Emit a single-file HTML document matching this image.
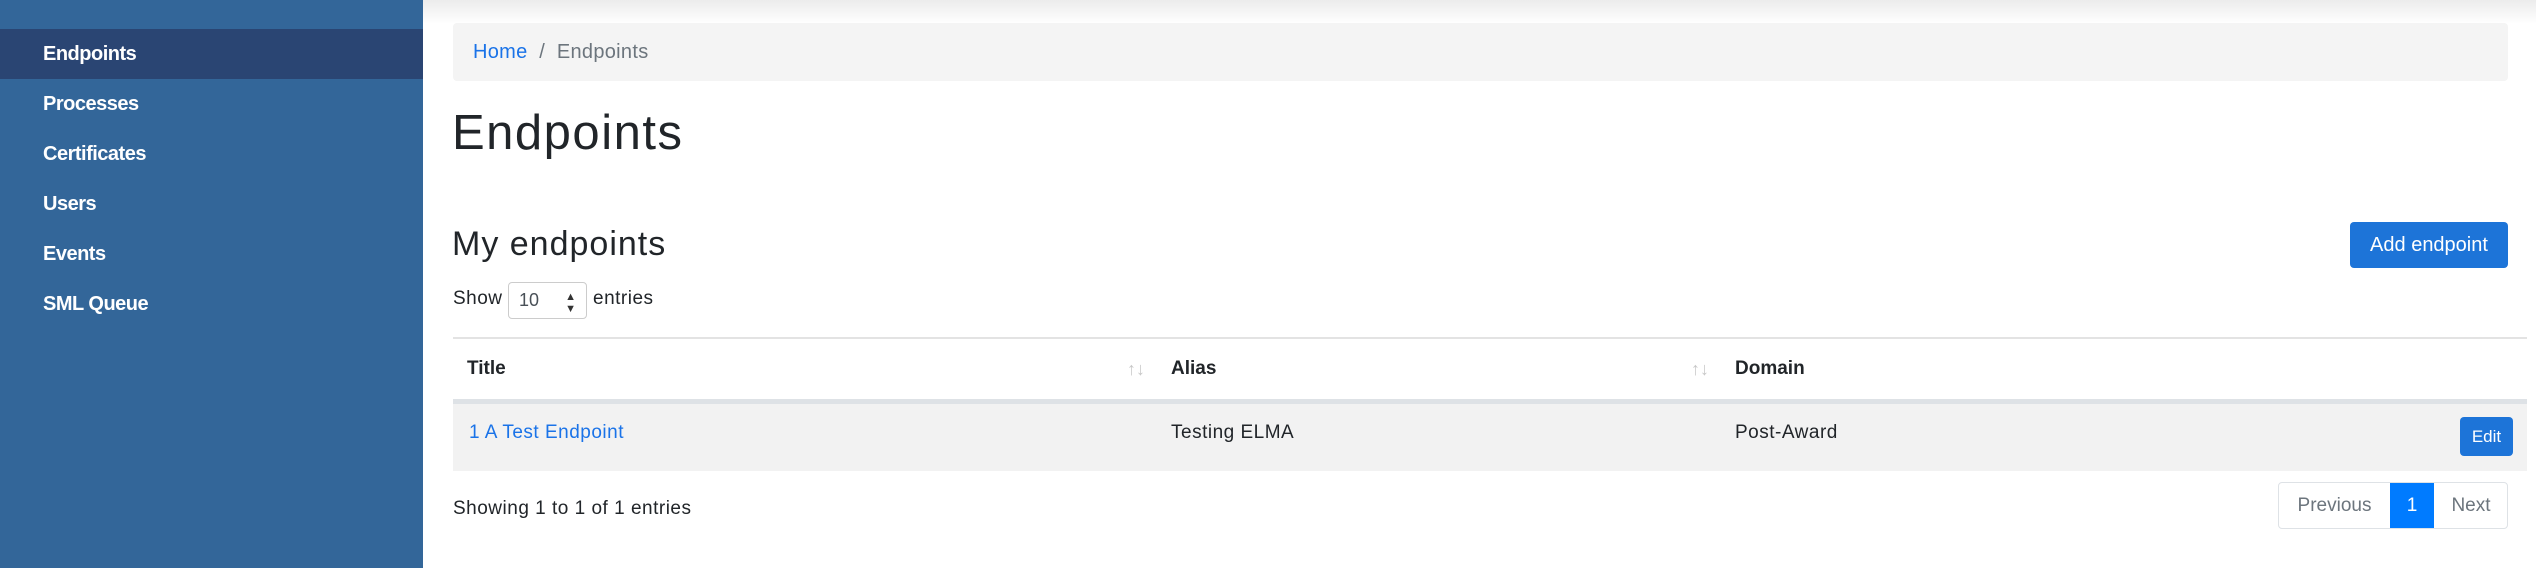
<!DOCTYPE html>
<html><head><style>
*{box-sizing:border-box;margin:0;padding:0}
body{width:2536px;height:568px;overflow:hidden;background:#fff;font-family:"Liberation Sans",sans-serif;color:#212529;position:relative}
.sb{position:absolute;left:0;top:0;width:423px;height:568px;background:#336699}
.sb div{position:absolute;left:0;width:423px;height:50px;line-height:50px;padding-left:43px;color:#fff;font-weight:bold;font-size:20px;letter-spacing:-0.5px}
.sb .act{background:#2a4573}
.topsh{position:absolute;left:423px;top:0;right:0;height:24px;background:linear-gradient(#ececec,#fff)}
.bc{position:absolute;left:453px;top:23px;width:2055px;height:58px;background:#f4f4f4;border-radius:4px;font-size:20px;line-height:58px;padding-left:20px;color:#6c757d;letter-spacing:0.3px}
.bc a{color:#1a73e8;text-decoration:none}
.abs{position:absolute;white-space:nowrap}
.t{letter-spacing:0.5px}
.btn{position:absolute;background:#1d74d8;color:#fff;border-radius:4px;text-align:center}
</style></head><body>
<div class="sb">
<div class="act" style="top:29px">Endpoints</div>
<div style="top:79px">Processes</div>
<div style="top:129px">Certificates</div>
<div style="top:179px">Users</div>
<div style="top:229px">Events</div>
<div style="top:279px">SML Queue</div>
</div>
<div class="topsh"></div>
<div class="bc"><a>Home</a>&nbsp; / &nbsp;Endpoints</div>
<div class="abs" style="left:452px;top:101px;font-size:49px;line-height:64px;font-weight:300;letter-spacing:1.5px">Endpoints</div>
<div class="abs" style="left:452px;top:222px;font-size:34px;line-height:44px;letter-spacing:1px">My endpoints</div>
<div class="btn" style="left:2350px;top:222px;width:158px;height:46px;line-height:46px;font-size:20px">Add endpoint</div>
<div class="abs t" style="left:453px;top:287px;font-size:19px;line-height:24px">Show</div>
<div class="abs" style="left:508px;top:282px;width:79px;height:37px;border:1px solid #ccc;border-radius:4px;font-size:18px;line-height:35px;padding-left:10px;color:#495057">10<span style="position:absolute;right:10px;font-size:11px;line-height:12px;top:8px;color:#333">▲<br>▼</span></div>
<div class="abs t" style="left:593px;top:287px;font-size:19px;line-height:24px">entries</div>
<div class="abs" style="left:453px;top:337px;width:2074px;height:2px;background:#e3e3e3"></div>
<div class="abs" style="left:467px;top:357px;font-size:19px;font-weight:bold;line-height:24px">Title</div>
<div class="abs" style="left:1127px;top:357px;font-size:18px;color:#c8c8c8;line-height:24px">↑↓</div>
<div class="abs" style="left:1171px;top:357px;font-size:19px;font-weight:bold;line-height:24px">Alias</div>
<div class="abs" style="left:1691px;top:357px;font-size:18px;color:#c8c8c8;line-height:24px">↑↓</div>
<div class="abs" style="left:1735px;top:357px;font-size:19px;font-weight:bold;line-height:24px">Domain</div>
<div class="abs" style="left:453px;top:399px;width:2074px;height:5px;background:#dee2e6"></div>
<div class="abs" style="left:453px;top:404px;width:2074px;height:67px;background:#f2f2f2"></div>
<div class="abs t" style="left:469px;top:421px;font-size:19px;line-height:24px;color:#1a73e8">1 A Test Endpoint</div>
<div class="abs t" style="left:1171px;top:421px;font-size:19px;line-height:24px">Testing ELMA</div>
<div class="abs t" style="left:1735px;top:421px;font-size:19px;line-height:24px">Post-Award</div>
<div class="btn" style="left:2460px;top:417px;width:53px;height:39px;line-height:39px;font-size:17px">Edit</div>
<div class="abs t" style="left:453px;top:497px;font-size:19px;line-height:24px">Showing 1 to 1 of 1 entries</div>
<div class="abs" style="left:2278px;top:482px;width:230px;height:47px;border:1px solid #dee2e6;border-radius:4px;font-size:19px;line-height:45px;color:#6c757d">
<span class="abs" style="left:0;width:111px;text-align:center">Previous</span>
<span class="abs" style="left:111px;width:44px;height:45px;background:#007bff;color:#fff;text-align:center">1</span>
<span class="abs" style="left:155px;width:74px;text-align:center">Next</span>
</div>
</body></html>
